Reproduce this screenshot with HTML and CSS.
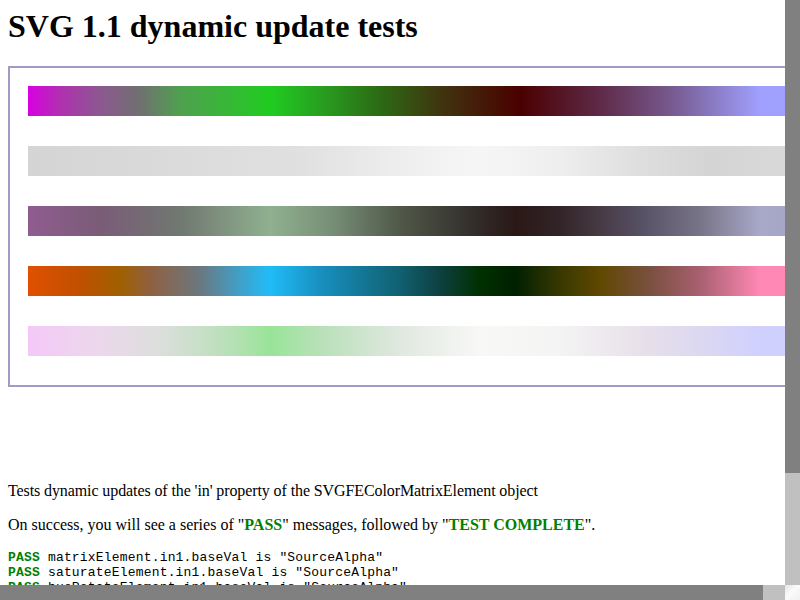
FILE: index.html
```html
<!DOCTYPE html>
<html lang="en">
<head>
<meta charset="utf-8">
<title>SVG 1.1 dynamic update tests</title>
<link rel="stylesheet" href="styles.css">
</head>
<body>
<div class="window">
  <div class="viewport">
    <div class="page">
      <h1 class="title">SVG 1.1 dynamic update tests</h1>
      <div class="figure">
        <div class="frame">
          <div class="bar bar-1"></div>
          <div class="bar bar-2"></div>
          <div class="bar bar-3"></div>
          <div class="bar bar-4"></div>
          <div class="bar bar-5"></div>
        </div>
      </div>
      <p class="desc desc-tight">Tests dynamic updates of the 'in' property of the SVGFEColorMatrixElement object</p>
      <p class="desc">On success, you will see a series of "<span class="pass">PASS</span>" messages, followed by "<span class="pass">TEST COMPLETE</span>".</p>
      <pre class="console"><span class="pass">PASS</span> matrixElement.in1.baseVal is "SourceAlpha"
<span class="pass">PASS</span> saturateElement.in1.baseVal is "SourceAlpha"
<span class="pass">PASS</span> hueRotateElement.in1.baseVal is "SourceAlpha"
<span class="pass">PASS</span> luminanceToAlphaElement.in1.baseVal is "SourceAlpha"
<span class="pass">PASS</span> matrixElement.in1.baseVal is "SourceGraphic"
<span class="pass">PASS</span> saturateElement.in1.baseVal is "SourceGraphic"
<span class="pass">PASS</span> hueRotateElement.in1.baseVal is "SourceGraphic"
<span class="pass">PASS</span> luminanceToAlphaElement.in1.baseVal is "SourceGraphic"
<span class="pass">PASS</span> successfullyParsed is true
<span class="pass">TEST COMPLETE</span></pre>
    </div>
  </div>
  <div class="vscroll"><div class="vthumb"></div></div>
  <div class="hscroll"><div class="hthumb"></div></div>
  <div class="corner"></div>
</div>
</body>
</html>
```
FILE: styles.css
```css
html, body {
  margin: 0;
  padding: 0;
  width: 800px;
  height: 600px;
  overflow: hidden;
  background: #ffffff;
}

body {
  font-family: "Liberation Serif", "Times New Roman", serif;
  font-size: 16px;
  color: #000000;
}

.window {
  display: grid;
  grid-template-columns: 785px 15px;
  grid-template-rows: 585px 15px;
  width: 800px;
  height: 600px;
}

.viewport {
  overflow: hidden;
  background: #ffffff;
}

.page {
  padding: 8px;
  width: 800px;
}

.title {
  margin: 0 0 21.44px 0;
  font-size: 32px;
  font-weight: bold;
  line-height: 37px;
}

.figure {
  width: 800px;
  height: 400px;
}

.frame {
  box-sizing: border-box;
  width: 800px;
  height: 321px;
  border-top: 2px solid #9c9cc4;
  border-left: 2px solid #9c9cc4;
  border-bottom: 2px solid #9c9cc4;
  padding: 18px 0 0 18px;
  display: flex;
  flex-direction: column;
  gap: 30px;
}

.bar {
  width: 780px;
  height: 30px;
  flex: none;
}

.bar-1 {
  background: linear-gradient(to right,
    #d800e0 0px, #b030b0 32px, #8c5890 72px, #707070 112px, #50a050 152px,
    #20cc20 242px, #28a020 292px, #2c6a14 352px, #403510 412px, #4a0000 492px,
    #5e2a48 572px, #7a6098 652px, #a0a0ff 732px, #a0a0ff 780px);
}

.bar-2 {
  background: linear-gradient(to right,
    #d4d4d4 0px, #dcdcdc 172px, #e0e0e0 272px, #eeeeee 372px, #f6f6f6 452px,
    #eeeeee 532px, #dedede 612px, #d4d4d4 682px, #dadada 780px);
}

.bar-3 {
  background: linear-gradient(to right,
    #905c90 0px, #7a5c78 72px, #707870 152px, #90b090 242px, #789078 302px,
    #505848 372px, #302a28 452px, #2a1816 487px, #322428 532px, #463a44 572px,
    #565064 612px, #787488 672px, #a8a8c8 732px, #a4a4c4 780px);
}

.bar-4 {
  background: linear-gradient(to right,
    #e05000 0px, #c05000 52px, #a06000 92px, #906040 122px, #6a7880 172px,
    #40a0c8 212px, #20bcf8 242px, #1890c0 292px, #106070 372px, #0e4040 412px,
    #003000 452px, #002000 487px, #383800 532px, #604800 572px, #7a5040 622px,
    #a86070 672px, #ff88b4 732px, #ff88b4 780px);
}

.bar-5 {
  background: linear-gradient(to right,
    #f4c8f8 0px, #ecd8ec 72px, #dcdedc 132px, #b8e0b8 202px, #98e498 242px,
    #b8e0b8 292px, #e0e8e0 372px, #f8f8f6 452px, #f4f4f4 532px, #e8e0ea 612px,
    #dcd8f0 672px, #d0d0ff 732px, #d0d0ff 780px);
}

.desc {
  margin: 16px 0;
  line-height: 18px;
}

.desc-tight {
  letter-spacing: -0.1px;
}

.pass {
  color: #008000;
  font-weight: bold;
}

.console {
  margin: 16px 0 13px 0;
  font-family: "Liberation Mono", "Courier New", monospace;
  font-size: 13px;
  line-height: 15px;
  letter-spacing: 0.18px;
}

.vscroll {
  display: flex;
  flex-direction: column;
  background: #c0c0c0;
}

.vthumb {
  height: 473px;
  background: #808080;
}

.hscroll {
  display: flex;
  background: #c0c0c0;
}

.hthumb {
  width: 763px;
  background: #808080;
}

.corner {
  background: linear-gradient(135deg, #e6e6e6 0%, #fafafa 45%, #f0f0f0 100%);
}
```
